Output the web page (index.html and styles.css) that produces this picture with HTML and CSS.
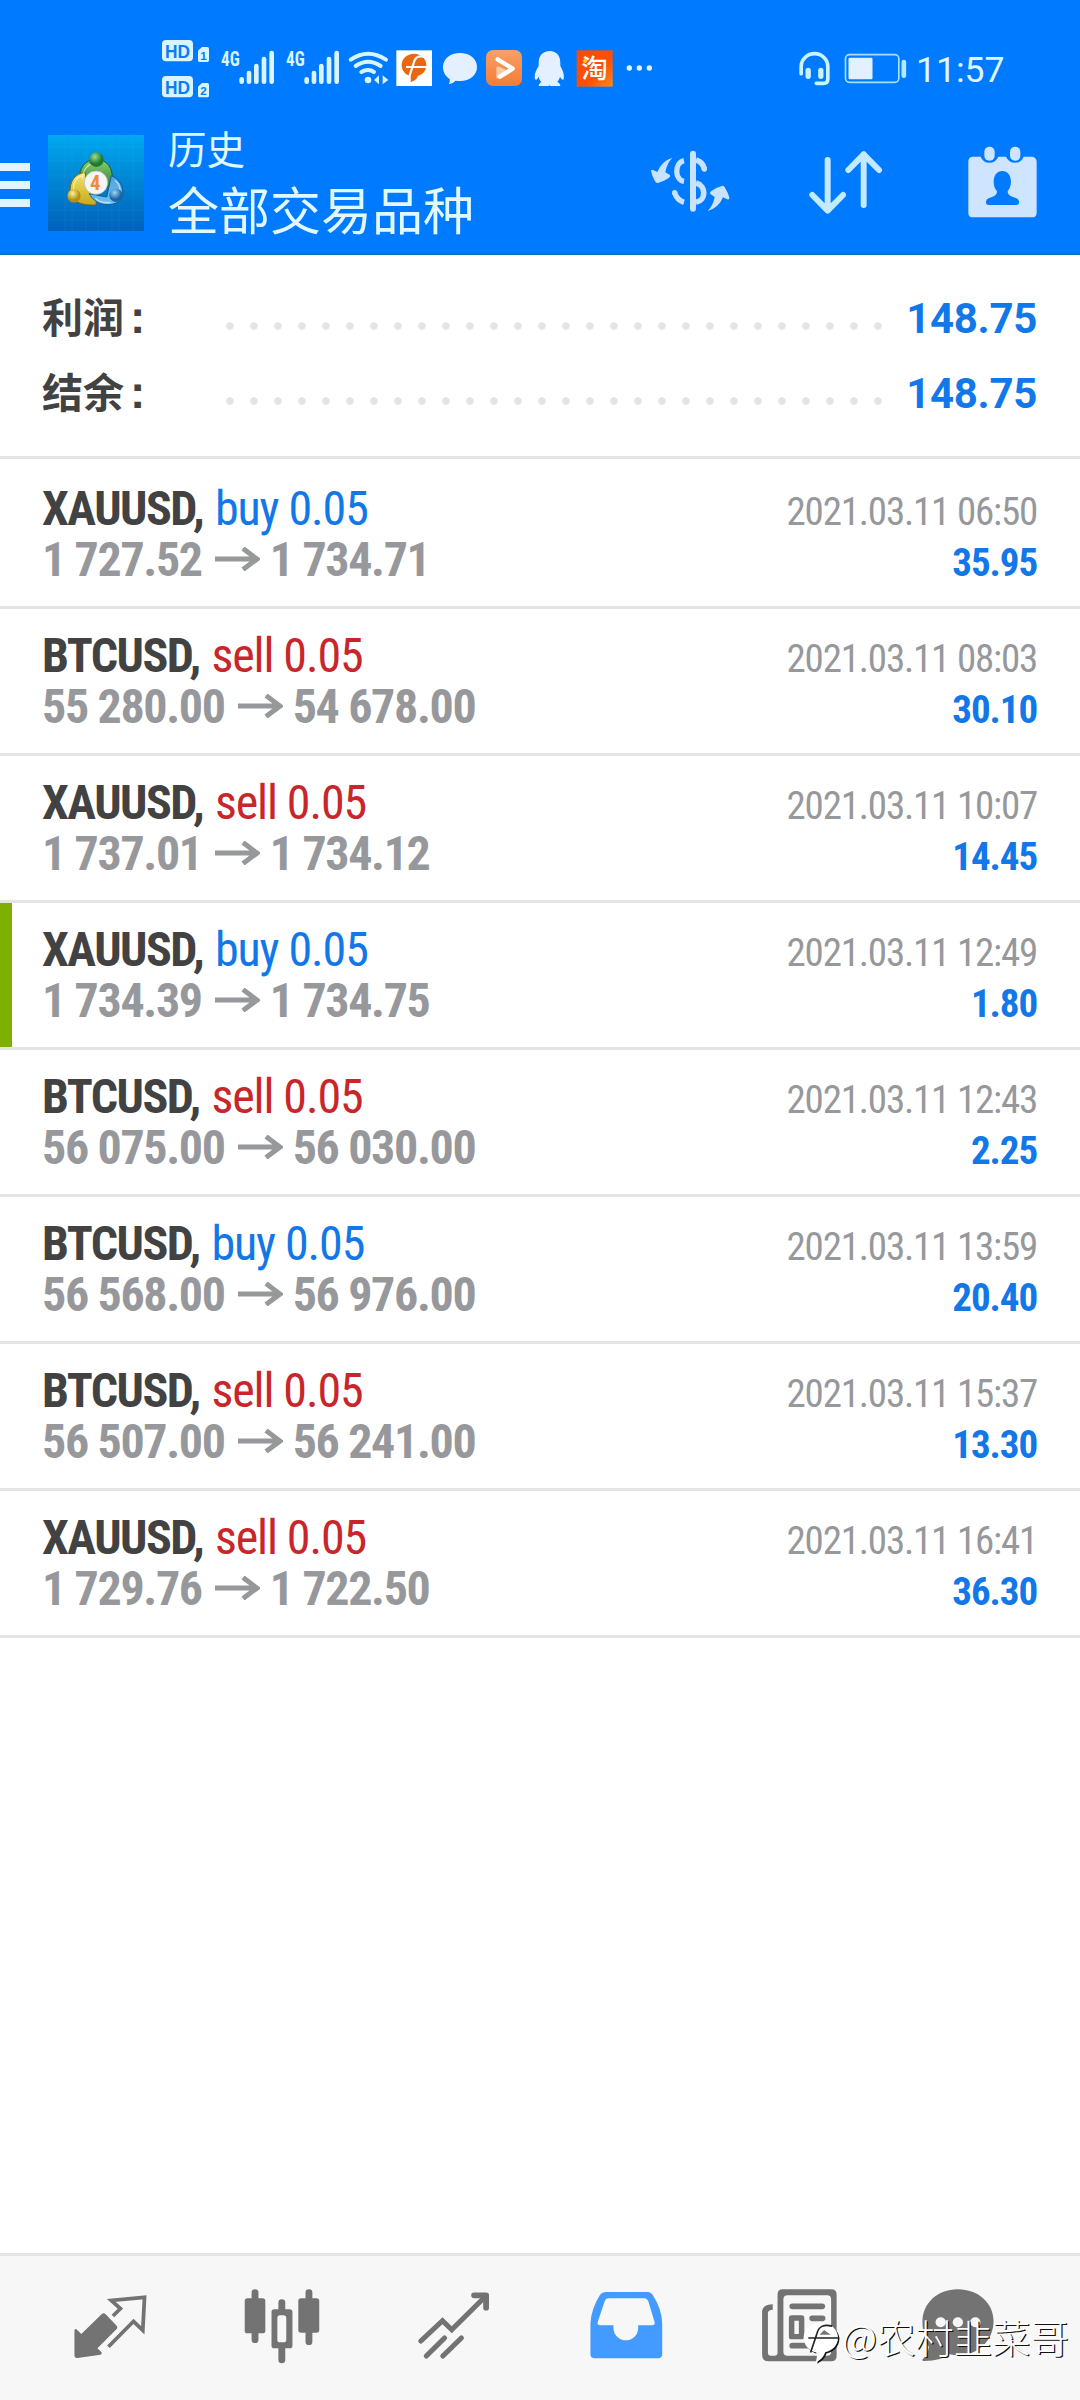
FILE: index.html
```html
<!DOCTYPE html>
<html lang="zh-CN">
<head>
<meta charset="utf-8">
<title>历史</title>
<link rel="stylesheet" href="styles.css">
</head>
<body>
<div class="app">
  <header class="top">
    <div class="status">
      <svg class="status-net" viewBox="60 54 690 180">
        <g fill="#d8f4ff">
          <rect x="66" y="60" width="93" height="64" rx="12"/>
          <rect x="66" y="168" width="93" height="64" rx="12"/>
          <path d="M174 92l12-11h16q5 0 5 5v35q0 5-5 5h-23q-5 0-5-5z"/>
          <path d="M174 200l12-11h16q5 0 5 5v33q0 5-5 5h-23q-5 0-5-5z"/>
        </g>
        <g class="hd">
          <text x="75" y="113" textLength="75" lengthAdjust="spacingAndGlyphs">HD</text>
          <text x="75" y="221" textLength="75" lengthAdjust="spacingAndGlyphs">HD</text>
          <text class="sim" x="181" y="119">1</text>
          <text class="sim" x="181" y="226">2</text>
        </g>
        <g class="gen">
          <text x="243" y="138" textLength="56" lengthAdjust="spacingAndGlyphs">4G</text>
          <text x="438" y="138" textLength="56" lengthAdjust="spacingAndGlyphs">4G</text>
        </g>
        <g stroke="#d8f4ff" stroke-width="14" stroke-linecap="round">
          <path d="M305 178v7M327 159v26M349 138v47M372 117v68M395 99v86"/>
          <path d="M500 178v7M522 159v26M544 138v47M567 117v68M590 99v86"/>
        </g>
        <g fill="none" stroke="#d8f4ff" stroke-width="12" stroke-linecap="round">
          <path d="M632 119Q684 83 738 119M647 138Q684 113 722 138M664 156Q684 144 702 156"/>
        </g>
        <circle cx="684" cy="180" r="10" fill="#d8f4ff"/>
        <path d="M717 166v27l-15-13zM728 166l17 14-17 13z" fill="#d8f4ff"/>
      </svg>
      <svg class="status-apps" viewBox="45 54 780 180">
        <defs>
          <linearGradient id="orange" x2="0" y2="1"><stop stop-color="#f9a066"/><stop offset="1" stop-color="#f47c34"/></linearGradient>
          <linearGradient id="tao" x2="1" y2="1"><stop stop-color="#fb4a04"/><stop offset=".6" stop-color="#fb5005"/><stop offset="1" stop-color="#ff8a1a"/></linearGradient>
        </defs>
        <rect x="49" y="91" width="107" height="107" fill="#fff"/>
        <path d="M102 101c21 0 37 15 37 34 0 17-10 29-25 32q-3 12-22 20 2-9-1-19c-15-4-26-16-26-33 0-19 16-34 37-34z" fill="#ea6610"/>
        <path d="M134 111q-27-8-33 18L86 176M78 141h62" fill="none" stroke="#fff" stroke-width="6.500"/>
        <path d="M240 99c30 0 51 18 51 42s-21 42-51 42q-6 0-13-1-8 9-21 11 5-7 3-16c-12-8-20-20-20-36 0-24 21-42 51-42z" fill="#e4f0ff"/>
        <rect x="318" y="90" width="108" height="108" rx="21" fill="url(#orange)"/>
        <path d="M353 143v29l30-16z" fill="#ffc9a8" stroke="#ffc9a8" stroke-width="8" stroke-linejoin="round"/>
        <path d="M353 118l45 28-38 24" fill="none" stroke="#fff" stroke-width="13" stroke-linecap="round" stroke-linejoin="round"/>
        <path d="M509 93c21 0 32 15 32 35v10c7 12 13 27 10 40-4 4-7-2-11-8-2 7-5 12-8 16 6 3 9 6 9 12h-31l-2-3-2 3h-30c0-6 4-9 8-12-4-4-7-9-8-16-4 7-8 12-11 8-3-13 3-28 11-40v-10c0-20 12-35 33-35z" fill="#e4f0ff"/>
        <rect x="590" y="91" width="108" height="109" fill="url(#tao)"/>
        <text class="tao" x="604" y="173">淘</text>
        <circle cx="615" cy="123" r="6" fill="#ffd21f"/>
        <g fill="#e0f4ff"><circle cx="748" cy="144" r="8"/><circle cx="778" cy="144" r="8"/><circle cx="808" cy="144" r="8"/></g>
      </svg>
      <svg class="status-power" viewBox="50 24 335 180">
        <g fill="none" stroke="#c8f3ff" stroke-linecap="round">
          <path d="M62 131v-21a40 39 0 0 1 80 0v36q0 14-14 14h-21" stroke-width="11"/>
          <path d="M83 121v18M121 121v18" stroke-width="16"/>
          <rect x="195" y="74" width="160" height="83" rx="12" stroke-width="5" stroke="#a5e2ff"/>
        </g>
        <rect x="204" y="83" width="72" height="65" rx="4" fill="#e4f0ff"/>
        <rect x="363" y="89" width="14" height="55" rx="7" fill="#b4eaff"/>
      </svg>
      <span class="clock">11:57</span>
    </div>
    <div class="toolbar">
      <div class="menu"><i></i><i></i><i></i></div>
      <svg class="logo" viewBox="24 15 288 288">
        <defs>
          <linearGradient id="sky" x2="0" y2="1"><stop stop-color="#00a8f0"/><stop offset=".5" stop-color="#0083d2"/><stop offset="1" stop-color="#0061bb"/></linearGradient>
          <linearGradient id="green" x2="0" y2="1"><stop stop-color="#8fce6c"/><stop offset="1" stop-color="#27853a"/></linearGradient>
          <linearGradient id="gold" x2="0" y2="1"><stop stop-color="#f1e56b"/><stop offset="1" stop-color="#c9a91e"/></linearGradient>
          <linearGradient id="blue" x2="0" y2="1"><stop stop-color="#4fa3dc"/><stop offset="1" stop-color="#6cc2f4"/></linearGradient>
          <radialGradient id="gb" cx=".4" cy=".3"><stop stop-color="#a2dc90"/><stop offset="1" stop-color="#1c7a31"/></radialGradient>
          <radialGradient id="yb" cx=".4" cy=".3"><stop stop-color="#fbf39a"/><stop offset="1" stop-color="#b3920c"/></radialGradient>
          <radialGradient id="bb" cx=".4" cy=".3"><stop stop-color="#a5d6f5"/><stop offset="1" stop-color="#1766a8"/></radialGradient>
        </defs>
        <rect x="24" y="15" width="288" height="288" fill="url(#sky)"/>
        <path d="M75 15v288M96 15v288M138 15v288M174 15v288M216 15v288M237 15v288M279 15v288M24 51h288M24 93h288M24 135h288M24 177h288M24 240h288M24 270h288" stroke="#5cc0f4" stroke-opacity=".2" stroke-width="1.5"/>
        <path d="M119 150c-4-35 17-62 50-62s52 29 47 62l-12 22-35-20-36-14z" fill="url(#green)" stroke="#165c2d" stroke-width="3"/>
        <path d="M136 128c-30 0-49 27-45 61 5 25 31 38 76 36l6-24-34-24z" fill="url(#gold)" stroke="#7b6a16" stroke-width="3"/>
        <path d="M214 137c22 8 38 32 34 60-6 24-36 31-62 25-17-4-31-17-38-31l52 10z" fill="url(#blue)" stroke="#135791" stroke-width="3"/>
        <path d="M128 145c0-24 14-43 36-46M101 177c-2-18 8-35 24-39M226 152c10 8 15 20 14 32M168 206c10 9 27 13 42 11" fill="none" stroke="#fff" stroke-opacity=".55" stroke-width="4" stroke-linecap="round"/>
        <circle cx="169" cy="89" r="22" fill="url(#gb)"/>
        <circle cx="102" cy="198" r="20" fill="url(#yb)"/>
        <circle cx="228" cy="196" r="20" fill="url(#bb)"/>
        <circle cx="168" cy="158" r="35" fill="#f5f5f3" stroke="#b8b8b8" stroke-width="2"/>
        <text class="four" x="150" y="181">4</text>
      </svg>
      <div class="titles"><div class="sub">历史</div><div class="title">全部交易品种</div></div>
      <svg class="act-currency" viewBox="60 45 240 225" fill="none" stroke="#c8e2ff">
        <path d="M189 71v165" stroke-width="18" stroke-linecap="round"/>
        <path d="M162 92c-29 6-29 58 0 62M134 189q8 22 28 28" stroke-width="16"/>
        <path d="M198 90q21 6 25 27M198 159c31 8 31 52 0 58" stroke-width="17"/>
        <circle cx="134" cy="188" r="8" fill="#c8e2ff" stroke="none"/><circle cx="223" cy="117" r="8" fill="#c8e2ff" stroke="none"/>
        <g fill="#c8e2ff" stroke="none">
          <path d="M127 83q-17 18-21 44l14 8q2 6-4 9-14 10-32 15-6 1-9-5-9-15-12-32 1-4 6-2l13 6q13-33 45-43z"/>
          <path d="M233 243q17-18 21-42l-13-9q-3-6 3-9 15-11 31-15 7-2 10 5 10 15 13 31-1 6-6 4l-13-6q-12 31-46 41z"/>
        </g>
      </svg>
      <svg class="act-sort" viewBox="535 45 225 225" fill="none" stroke="#c2ebff" stroke-width="18" stroke-linecap="round" stroke-linejoin="round">
        <path d="M594 90v151M548 195l46 47 46-47M702 225V73M656 120l46-47 46 47"/>
      </svg>
      <svg class="act-period" viewBox="1010 45 210 225" fill="#cfe5ff">
        <path d="M1026 80h25q7 18 26 18t27-18h23q8 18 27 18t26-18h25q14 2 14 16v152q0 14-14 14h-177q-14 0-14-14V94q0-12 12-14z"/>
        <rect x="1062" y="50" width="31" height="42" rx="15"/><rect x="1139" y="50" width="31" height="42" rx="15"/>
        <path d="M1116 123c16 0 26 13 26 32 0 13-5 22-10 28 0 14 10 16 25 21q9 4 9 11v4q0 6-8 6h-83q-8 0-8-6v-4q0-7 9-11c16-5 24-7 24-21-6-6-10-15-10-28 0-19 10-32 26-32z" fill="#007aff"/>
      </svg>
    </div>
  </header>

  <section class="summary">
    <div class="sum"><span class="sum-label">利润<span class="colon">:</span></span><span class="dots"></span><b>148.75</b></div>
    <div class="sum"><span class="sum-label">结余<span class="colon">:</span></span><span class="dots"></span><b>148.75</b></div>
  </section>

  <svg class="defs" width="0" height="0"><symbol id="arrow" viewBox="0 0 45 24"><path d="M0 12h41M28 1.500l14 10.500-14 10.500" fill="none" stroke="currentColor" stroke-width="5"/></symbol></svg>

  <main class="deals">
    <div class="deal first">
      <div class="line"><span class="sym">XAUUSD, <span class="buy">buy 0.05</span></span><span class="time">2021.03.11 06:50</span></div>
      <div class="line"><span class="price">1 727.52<svg><use href="#arrow"/></svg>1 734.71</span><span class="profit">35.95</span></div>
    </div>
    <div class="deal">
      <div class="line"><span class="sym">BTCUSD, <span class="sell">sell 0.05</span></span><span class="time">2021.03.11 08:03</span></div>
      <div class="line"><span class="price">55 280.00<svg><use href="#arrow"/></svg>54 678.00</span><span class="profit">30.10</span></div>
    </div>
    <div class="deal">
      <div class="line"><span class="sym">XAUUSD, <span class="sell">sell 0.05</span></span><span class="time">2021.03.11 10:07</span></div>
      <div class="line"><span class="price">1 737.01<svg><use href="#arrow"/></svg>1 734.12</span><span class="profit">14.45</span></div>
    </div>
    <div class="deal marked">
      <div class="line"><span class="sym">XAUUSD, <span class="buy">buy 0.05</span></span><span class="time">2021.03.11 12:49</span></div>
      <div class="line"><span class="price">1 734.39<svg><use href="#arrow"/></svg>1 734.75</span><span class="profit">1.80</span></div>
    </div>
    <div class="deal">
      <div class="line"><span class="sym">BTCUSD, <span class="sell">sell 0.05</span></span><span class="time">2021.03.11 12:43</span></div>
      <div class="line"><span class="price">56 075.00<svg><use href="#arrow"/></svg>56 030.00</span><span class="profit">2.25</span></div>
    </div>
    <div class="deal">
      <div class="line"><span class="sym">BTCUSD, <span class="buy">buy 0.05</span></span><span class="time">2021.03.11 13:59</span></div>
      <div class="line"><span class="price">56 568.00<svg><use href="#arrow"/></svg>56 976.00</span><span class="profit">20.40</span></div>
    </div>
    <div class="deal">
      <div class="line"><span class="sym">BTCUSD, <span class="sell">sell 0.05</span></span><span class="time">2021.03.11 15:37</span></div>
      <div class="line"><span class="price">56 507.00<svg><use href="#arrow"/></svg>56 241.00</span><span class="profit">13.30</span></div>
    </div>
    <div class="deal">
      <div class="line"><span class="sym">XAUUSD, <span class="sell">sell 0.05</span></span><span class="time">2021.03.11 16:41</span></div>
      <div class="line"><span class="price">1 729.76<svg><use href="#arrow"/></svg>1 722.50</span><span class="profit">36.30</span></div>
    </div>
  </main>

  <nav class="tabs">
    <svg viewBox="205 140 230 240" preserveAspectRatio="none">
      <path d="M220 266l15 15 59-59q6-6 12 0l32 34q4 5 0 10l-56 58 12 12q2 5-3 7l-67 10q-9 1-9-9v-73q0-6 5-5z" fill="#737373"/>
      <path d="M327 227l22-22-27-25 97-9-5 99-27-27-73 76" fill="none" stroke="#737373" stroke-width="11"/>
    </svg>
    <svg viewBox="704 140 230 240" preserveAspectRatio="none">
      <g fill="#737373"><rect x="709" y="174" width="60" height="105" rx="8"/><rect x="865" y="174" width="61" height="103" rx="8"/><rect x="787" y="207" width="61" height="117" rx="8"/></g>
      <path d="M739 157v141M896 157v147M817 187v172" stroke="#737373" stroke-width="20" stroke-linecap="round"/>
      <rect x="804" y="225" width="26" height="81" rx="8" fill="#f7f7f7"/>
    </svg>
    <svg viewBox="1204 140 230 240" preserveAspectRatio="none">
      <path d="M1221 302l63-61 27 27 100-102M1237 347l53-54M1285 347l54-54" fill="none" stroke="#737373" stroke-width="15" stroke-linecap="round"/>
      <path d="M1376 165h35v37" fill="none" stroke="#737373" stroke-width="17" stroke-linecap="round" stroke-linejoin="round"/>
    </svg>
    <svg viewBox="137 140 230 240" preserveAspectRatio="none">
      <path fill-rule="evenodd" d="M191 155h123q9 0 14 8 27 43 28 86v92q0 13-13 13H160q-13 0-13-13v-92q2-43 28-86 6-8 16-8zm9 19q-8 0-11 7l-21 65q-2 9 8 9h38v8a36 37 0 0 0 72 0v-8h40q10 0 8-9l-19-65q-4-7-12-7z" fill="#439aff"/>
    </svg>
    <svg viewBox="637 140 230 240" preserveAspectRatio="none">
      <path fill-rule="evenodd" d="M706 147h141q16 0 16 16v184q0 16-16 16H666q-20 0-20-20V213q2-21 31-21v16q-14 0-14 11v118q0 9 9 9h9q10 0 10-9V163q0-16 15-16zm14 18q-12 0-12 12v157q0 12 12 12h115q12 0 12-12V177q0-12-12-12z" fill="#737373"/>
      <path d="M734 198h87M792 234h30M792 271h30M734 316h87" stroke="#737373" stroke-width="17" stroke-linecap="round"/>
      <rect x="732" y="233" width="29" height="56" fill="none" stroke="#737373" stroke-width="16" stroke-linejoin="round"/>
    </svg>
    <svg viewBox="1097 140 230 240" preserveAspectRatio="none">
      <path d="M1213 147c60 0 104 42 104 95 0 58-44 103-104 103q-12 0-23-3-28 21-78 20-5-2 1-8 12-11 16-34c-12-22-19-48-19-75 0-56 43-98 103-98z" fill="#737373"/>
      <g fill="#f7f7f7"><circle cx="1163" cy="246" r="15"/><circle cx="1213" cy="246" r="15"/><circle cx="1264" cy="246" r="15"/></g>
    </svg>
  </nav>
  <div class="watermark">
    <svg viewBox="10 60 118 132">
      <path transform="translate(4 4)" d="M64 68c29 0 52 20 52 45 0 23-18 40-39 44q-4 18-28 31 6-15 1-30c-22-6-38-23-38-45 0-25 23-45 52-45z" fill="#111"/>
      <path d="M64 68c29 0 52 20 52 45 0 23-18 40-39 44q-4 18-28 31 6-15 1-30c-22-6-38-23-38-45 0-25 23-45 52-45z" fill="#fff"/>
      <path d="M98 78q-38-10-46 23L33 158M26 114h94" fill="none" stroke="#222" stroke-width="5"/>
      <path d="M60 104l14-14 20 14zM66 109h46" fill="#777"/>
    </svg>
    <span>@农村韭菜哥</span>
  </div>
</div>
</body>
</html>
```
FILE: styles.css
```css
* { box-sizing: border-box; }
body { margin: 0; background: #fff; }
svg { display: block; flex: none; }
.defs { position: absolute; }

.app {
  position: relative;
  display: flex;
  flex-direction: column;
  width: 1080px;
  height: 2400px;
  font-family: Roboto, "Noto Sans CJK SC", sans-serif;
  color: #424242;
}

.top { height: 255px; background: #007aff; border-bottom: 2px solid #1670b8; }

.status { display: flex; height: 105px; padding: 38px 0 0 160px; }
.status svg { height: 60px; }
.status .status-net { width: 230px; }
.status .status-apps { width: 260px; margin-left: 5px; }
.status .status-power { width: 112px; margin-left: 142px; }
.hd { font: 700 53px "Liberation Sans", sans-serif; fill: #0a7cf5; }
.hd .sim { font-size: 35px; }
.gen { font: 700 60px "Roboto Condensed", sans-serif; fill: #d8f4ff; }
.tao { font: 500 80px "Noto Sans CJK SC", sans-serif; fill: #fff; }
.clock { margin-left: 7px; font-size: 35.5px; line-height: 65px; color: #e0f7ff; }

.toolbar { display: flex; height: 148px; padding-top: 15px; }
.menu { display: flex; flex-direction: column; gap: 10px; width: 30px; margin-top: 43px; }
.menu i { height: 8px; background: #e2f4ff; }
.logo { width: 96px; height: 96px; margin: 15px 24px 0 18px; }
.four { font: 700 62px "Roboto Condensed", sans-serif; fill: #ef8a3c; }
.titles { width: 482px; padding-top: 1px; color: #e2f8ff; }
.sub { font-size: 38.5px; line-height: 60px; }
.title { margin-top: 2px; font-size: 51px; line-height: 60px; white-space: nowrap; }
.toolbar .act-currency { width: 80px; height: 75px; margin-top: 25px; }
.toolbar .act-sort { width: 75px; height: 75px; margin: 25px 0 0 78px; }
.toolbar .act-period { width: 70px; height: 75px; margin: 25px 0 0 84px; }

.summary { height: 204px; padding: 23px 43px 0 42px; border-bottom: 3px solid #e4e4e4; }
.sum { display: flex; align-items: baseline; height: 75px; line-height: 75px; font-size: 42px; }
.sum-label { width: 176px; font-family: "Noto Sans CJK SC", sans-serif; font-weight: 700; font-size: 41px; line-height: 75px; }
.colon { margin-left: 6px; font-family: "Liberation Sans", sans-serif; font-size: 46px; line-height: 1; }
.dots {
  width: 672px;
  height: 24px;
  align-self: flex-start;
  margin-top: 36px;
  background: radial-gradient(circle, #e4e4e4 3.4px, transparent 4.2px) 0 0 / 24px 24px;
}
.sum b { margin-left: auto; color: #1277e8; font-weight: 700; letter-spacing: -0.3px; }

.deal {
  height: 147px;
  padding: 21px 43px 0 42px;
  border-bottom: 3px solid #e4e4e4;
  font-family: "Roboto Condensed", sans-serif;
}
.deal.first { height: 150px; padding-top: 24px; }
.deal.marked { background: linear-gradient(#7eb000, #7eb000) no-repeat 0 0 / 12px 144px; }
.line { display: flex; justify-content: space-between; align-items: baseline; height: 51px; line-height: 51px; white-space: nowrap; }
.sym { font-size: 48px; font-weight: 700; letter-spacing: -1.5px; }
.buy, .sell { margin-left: 2px; font-weight: 400; letter-spacing: -1.1px; }
.buy { color: #1277e8; }
.sell { color: #c8262b; }
.price { display: flex; font-size: 48px; font-weight: 700; letter-spacing: -1.35px; color: #97989b; }
.price svg { width: 45px; height: 24px; margin: 13px 10px 0 13px; }
.time { font-size: 39px; letter-spacing: -1.2px; color: #97989b; }
.profit { font-size: 39px; font-weight: 700; letter-spacing: -1.1px; color: #1277e8; }

.tabs {
  display: grid;
  grid-template-columns: repeat(5, 172.1px) 146px;
  justify-items: center;
  height: 147px;
  margin-top: auto;
  padding: 31px 0 0 24px;
  background: #f7f7f7;
  border-top: 3px solid #e4e4e4;
}
.tabs svg { width: 79px; height: 80px; }

.watermark { position: absolute; left: 803px; top: 2320px; display: flex; white-space: nowrap; }
.watermark svg { width: 39px; height: 44px; }
.watermark span {
  font: 300 38.400px/33px "Noto Sans CJK SC", sans-serif;
  color: #fff;
  text-shadow: 1.2px 1.2px 0 #111;
}
```
